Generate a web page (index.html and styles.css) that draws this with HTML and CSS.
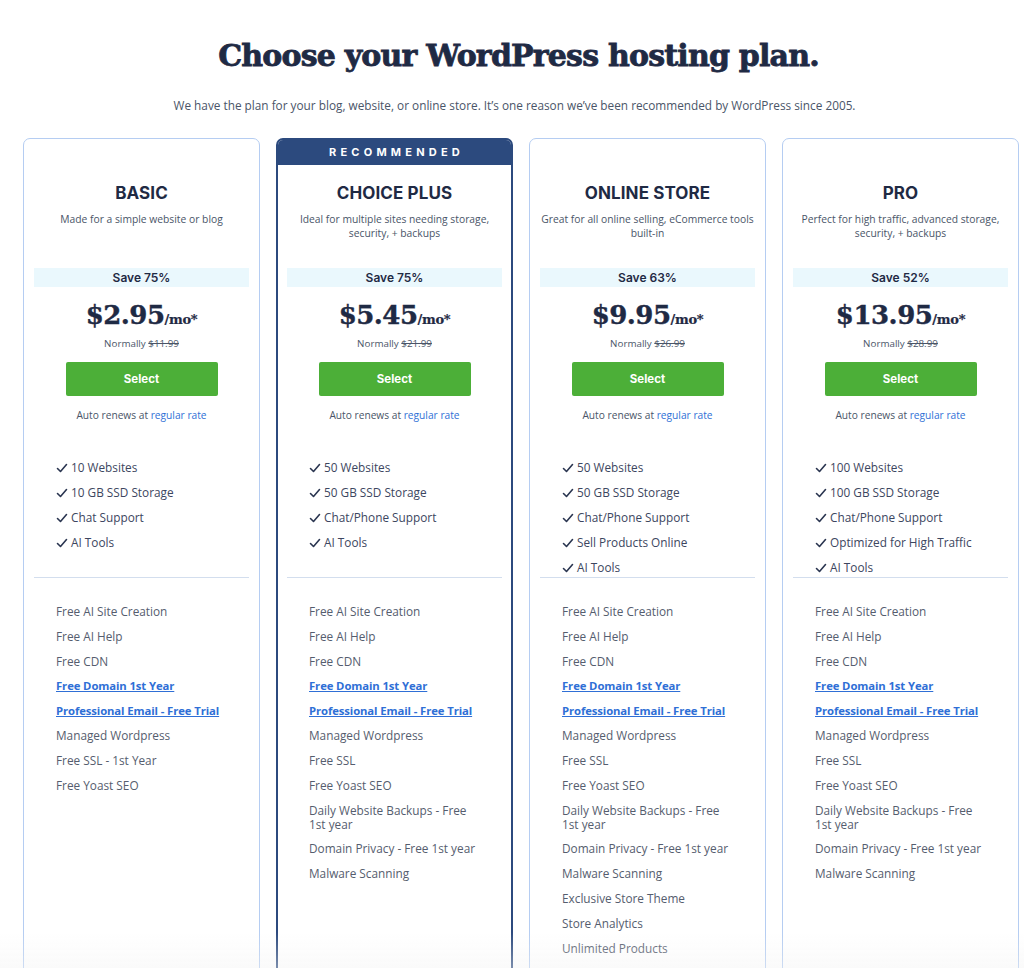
FILE: index.html
```html
<!DOCTYPE html>
<html lang="en">
<head>
<meta charset="utf-8">
<title>Choose your WordPress hosting plan</title>
<link rel="stylesheet" href="styles.css">
</head>
<body>
<main class="page">
  <h1 class="title">Choose your WordPress hosting plan.</h1>
  <p class="lead">We have the plan for your blog, website, or online store. It’s one reason we’ve been recommended by WordPress since 2005.</p>

  <div class="plans">
    <!-- BASIC -->
    <section class="card">
      <div class="badge-space"></div>
      <h2 class="plan-name">BASIC</h2>
      <p class="plan-desc">Made for a simple website or blog</p>
      <div class="save">Save 75%</div>
      <div class="price"><span class="amount">$2.95</span><span class="per">/mo*</span></div>
      <div class="normally">Normally <s>$11.99</s></div>
      <button class="select">Select</button>
      <div class="renew">Auto renews at <a href="#">regular rate</a></div>
      <ul class="features">
        <li><svg class="check" viewBox="0 0 12 12"><path d="M1.5 6.5l3 3 6-7" /></svg>10 Websites</li>
        <li><svg class="check" viewBox="0 0 12 12"><path d="M1.5 6.5l3 3 6-7" /></svg>10 GB SSD Storage</li>
        <li><svg class="check" viewBox="0 0 12 12"><path d="M1.5 6.5l3 3 6-7" /></svg>Chat Support</li>
        <li><svg class="check" viewBox="0 0 12 12"><path d="M1.5 6.5l3 3 6-7" /></svg>AI Tools</li>
      </ul>
      <hr class="divider">
      <ul class="extras">
        <li>Free AI Site Creation</li>
        <li>Free AI Help</li>
        <li>Free CDN</li>
        <li><a href="#">Free Domain 1st Year</a></li>
        <li><a href="#">Professional Email - Free Trial</a></li>
        <li>Managed Wordpress</li>
        <li>Free SSL - 1st Year</li>
        <li>Free Yoast SEO</li>
      </ul>
    </section>

    <!-- CHOICE PLUS -->
    <section class="card recommended">
      <div class="badge-space badge">RECOMMENDED</div>
      <h2 class="plan-name">CHOICE PLUS</h2>
      <p class="plan-desc">Ideal for multiple sites needing storage, security, + backups</p>
      <div class="save">Save 75%</div>
      <div class="price"><span class="amount">$5.45</span><span class="per">/mo*</span></div>
      <div class="normally">Normally <s>$21.99</s></div>
      <button class="select">Select</button>
      <div class="renew">Auto renews at <a href="#">regular rate</a></div>
      <ul class="features">
        <li><svg class="check" viewBox="0 0 12 12"><path d="M1.5 6.5l3 3 6-7" /></svg>50 Websites</li>
        <li><svg class="check" viewBox="0 0 12 12"><path d="M1.5 6.5l3 3 6-7" /></svg>50 GB SSD Storage</li>
        <li><svg class="check" viewBox="0 0 12 12"><path d="M1.5 6.5l3 3 6-7" /></svg>Chat/Phone Support</li>
        <li><svg class="check" viewBox="0 0 12 12"><path d="M1.5 6.5l3 3 6-7" /></svg>AI Tools</li>
      </ul>
      <hr class="divider">
      <ul class="extras">
        <li>Free AI Site Creation</li>
        <li>Free AI Help</li>
        <li>Free CDN</li>
        <li><a href="#">Free Domain 1st Year</a></li>
        <li><a href="#">Professional Email - Free Trial</a></li>
        <li>Managed Wordpress</li>
        <li>Free SSL</li>
        <li>Free Yoast SEO</li>
        <li>Daily Website Backups - Free<br>1st year</li>
        <li>Domain Privacy - Free 1st year</li>
        <li>Malware Scanning</li>
      </ul>
    </section>

    <!-- ONLINE STORE -->
    <section class="card">
      <div class="badge-space"></div>
      <h2 class="plan-name">ONLINE STORE</h2>
      <p class="plan-desc">Great for all online selling, eCommerce tools built-in</p>
      <div class="save">Save 63%</div>
      <div class="price"><span class="amount">$9.95</span><span class="per">/mo*</span></div>
      <div class="normally">Normally <s>$26.99</s></div>
      <button class="select">Select</button>
      <div class="renew">Auto renews at <a href="#">regular rate</a></div>
      <ul class="features">
        <li><svg class="check" viewBox="0 0 12 12"><path d="M1.5 6.5l3 3 6-7" /></svg>50 Websites</li>
        <li><svg class="check" viewBox="0 0 12 12"><path d="M1.5 6.5l3 3 6-7" /></svg>50 GB SSD Storage</li>
        <li><svg class="check" viewBox="0 0 12 12"><path d="M1.5 6.5l3 3 6-7" /></svg>Chat/Phone Support</li>
        <li><svg class="check" viewBox="0 0 12 12"><path d="M1.5 6.5l3 3 6-7" /></svg>Sell Products Online</li>
        <li><svg class="check" viewBox="0 0 12 12"><path d="M1.5 6.5l3 3 6-7" /></svg>AI Tools</li>
      </ul>
      <hr class="divider">
      <ul class="extras">
        <li>Free AI Site Creation</li>
        <li>Free AI Help</li>
        <li>Free CDN</li>
        <li><a href="#">Free Domain 1st Year</a></li>
        <li><a href="#">Professional Email - Free Trial</a></li>
        <li>Managed Wordpress</li>
        <li>Free SSL</li>
        <li>Free Yoast SEO</li>
        <li>Daily Website Backups - Free<br>1st year</li>
        <li>Domain Privacy - Free 1st year</li>
        <li>Malware Scanning</li>
        <li>Exclusive Store Theme</li>
        <li>Store Analytics</li>
        <li>Unlimited Products</li>
      </ul>
    </section>

    <!-- PRO -->
    <section class="card">
      <div class="badge-space"></div>
      <h2 class="plan-name">PRO</h2>
      <p class="plan-desc">Perfect for high traffic, advanced storage, security, + backups</p>
      <div class="save">Save 52%</div>
      <div class="price"><span class="amount">$13.95</span><span class="per">/mo*</span></div>
      <div class="normally">Normally <s>$28.99</s></div>
      <button class="select">Select</button>
      <div class="renew">Auto renews at <a href="#">regular rate</a></div>
      <ul class="features">
        <li><svg class="check" viewBox="0 0 12 12"><path d="M1.5 6.5l3 3 6-7" /></svg>100 Websites</li>
        <li><svg class="check" viewBox="0 0 12 12"><path d="M1.5 6.5l3 3 6-7" /></svg>100 GB SSD Storage</li>
        <li><svg class="check" viewBox="0 0 12 12"><path d="M1.5 6.5l3 3 6-7" /></svg>Chat/Phone Support</li>
        <li><svg class="check" viewBox="0 0 12 12"><path d="M1.5 6.5l3 3 6-7" /></svg>Optimized for High Traffic</li>
        <li><svg class="check" viewBox="0 0 12 12"><path d="M1.5 6.5l3 3 6-7" /></svg>AI Tools</li>
      </ul>
      <hr class="divider">
      <ul class="extras">
        <li>Free AI Site Creation</li>
        <li>Free AI Help</li>
        <li>Free CDN</li>
        <li><a href="#">Free Domain 1st Year</a></li>
        <li><a href="#">Professional Email - Free Trial</a></li>
        <li>Managed Wordpress</li>
        <li>Free SSL</li>
        <li>Free Yoast SEO</li>
        <li>Daily Website Backups - Free<br>1st year</li>
        <li>Domain Privacy - Free 1st year</li>
        <li>Malware Scanning</li>
      </ul>
    </section>
  </div>
</main>
<div class="fade"></div>
</body>
</html>
```

FILE: styles.css
```css
* { box-sizing: border-box; }

html, body {
  margin: 0;
  padding: 0;
  background: #ffffff;
}

body {
  font-family: "Open Sans", "Liberation Sans", sans-serif;
  color: #1f2a44;
}

.page {
  padding: 36px 6px 0 23px;
}

.title {
  margin: 0;
  text-align: center;
  font-family: "DejaVu Serif", "Liberation Serif", serif;
  font-weight: 700;
  font-size: 30px;
  line-height: 40px;
  letter-spacing: -0.8px;
  -webkit-text-stroke: 0.8px #1f2a44;
  color: #1f2a44;
  padding-right: 4px;
}

.lead {
  margin: 21px 0 0;
  text-align: center;
  font-size: 11.8px;
  line-height: 16px;
  color: #4a5568;
  padding-right: 12px;
}

.plans {
  margin-top: 25px;
  display: grid;
  grid-template-columns: repeat(4, 237px);
  column-gap: 16px;
}

.card {
  border: 1px solid #b5cdf2;
  border-radius: 7px;
  padding: 0 10px 40px;
  min-height: 860px;
  display: flex;
  flex-direction: column;
  align-items: stretch;
  text-align: center;
  overflow: hidden;
}

.card.recommended {
  border: 2px solid #2c4a7e;
  padding: 0 9px 40px;
}

.badge-space {
  height: 26px;
  margin: 0 -10px;
}

.badge {
  margin: 0 -9px;
  height: 25px;
  background: #2c4a7e;
  color: #ffffff;
  font-family: "Inter", "Liberation Sans", sans-serif;
  font-weight: 700;
  font-size: 11px;
  letter-spacing: 4.2px;
  line-height: 25px;
  padding-left: 4px;
}

.plan-name {
  margin: 18px 0 0;
  font-family: "Inter", "Liberation Sans", sans-serif;
  font-weight: 700;
  font-size: 17px;
  line-height: 20px;
  color: #1f2a44;
  letter-spacing: 0.1px;
}

.plan-desc {
  margin: 9px -4px 0;
  min-height: 28px;
  font-size: 10.3px;
  line-height: 14px;
  color: #4a5568;
}

.save {
  margin-top: 28px;
  height: 19px;
  line-height: 19px;
  background: #eaf8fd;
  font-family: "Inter", "Liberation Sans", sans-serif;
  font-weight: 600;
  font-size: 12px;
  color: #1f2a44;
}

.price {
  margin-top: 12px;
  height: 32px;
  display: flex;
  justify-content: center;
  align-items: baseline;
  font-family: "DejaVu Serif", "Liberation Serif", serif;
  font-weight: 700;
  color: #1f2a44;
  -webkit-text-stroke: 0.4px #1f2a44;
}

.amount {
  font-size: 26px;
  line-height: 32px;
  letter-spacing: -0.5px;
}

.per {
  font-size: 13px;
  letter-spacing: -0.3px;
  -webkit-text-stroke: 0.2px #1f2a44;
}

.normally {
  margin-top: 6px;
  font-size: 9.8px;
  line-height: 14px;
  color: #4a5568;
}

.select {
  display: block;
  margin: 11px auto 0;
  width: 152px;
  height: 34px;
  border: none;
  border-radius: 2px;
  background: #4caf38;
  color: #ffffff;
  font-family: "Inter", "Liberation Sans", sans-serif;
  font-weight: 700;
  font-size: 11.5px;
  cursor: pointer;
}

.renew {
  margin-top: 12px;
  font-size: 10.2px;
  line-height: 14px;
  color: #4a5568;
}

.renew a {
  color: #2f6fd6;
  text-decoration: none;
}

.features {
  list-style: none;
  margin: 33px 0 0;
  padding: 0 0 0 22px;
  height: 122px;
  text-align: left;
}

.features li {
  height: 25px;
  line-height: 25px;
  font-size: 11.8px;
  color: #3c4660;
  display: flex;
  align-items: center;
  white-space: nowrap;
}

.check {
  width: 12px;
  height: 12px;
  margin-right: 3px;
  fill: none;
  stroke: #2a3550;
  stroke-width: 1.6;
  stroke-linecap: round;
  stroke-linejoin: round;
  flex: none;
}

.divider {
  margin: 0;
  border: none;
  border-top: 1px solid #d3deee;
}

.extras {
  list-style: none;
  margin: 21px 0 0;
  padding: 0 0 0 22px;
  text-align: left;
}

.extras li {
  font-size: 11.8px;
  line-height: 14px;
  padding: 5.4px 0;
  color: #555d6e;
}

.extras a {
  display: inline-block;
  vertical-align: top;
  line-height: 14px;
  color: #2f6fd6;
  font-weight: 700;
  font-size: 11.3px;
  text-decoration: underline;
  white-space: nowrap;
  letter-spacing: -0.1px;
}

.fade {
  position: fixed;
  left: 0;
  right: 0;
  bottom: 0;
  height: 36px;
  background: linear-gradient(to bottom, rgba(245,245,245,0), rgba(243,243,243,0.4));
  pointer-events: none;
}
```
